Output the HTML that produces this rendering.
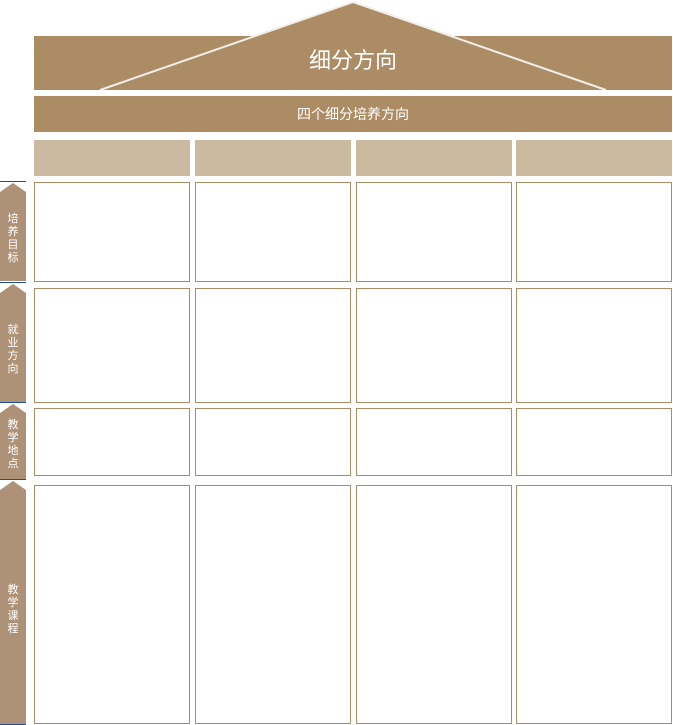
<!DOCTYPE html>
<html><head><meta charset="utf-8"><style>
html,body{margin:0;padding:0;background:#fff;width:673px;height:725px;overflow:hidden}
svg text{font-family:"Liberation Sans","Noto Sans CJK SC",sans-serif}
</style></head><body>
<svg width="673" height="725" viewBox="0 0 673 725" xmlns="http://www.w3.org/2000/svg">
<rect x="34" y="36" width="638" height="54" fill="#ac8c65"/>
<polygon points="100,90 353,2 606,90" fill="#ac8c65"/>
<polyline points="100,90 353,2 606,90" fill="none" stroke="#f2eee8" stroke-width="2"/>
<text x="353" y="68" font-size="22" fill="#fff" text-anchor="middle">细分方向</text>
<rect x="34" y="96" width="638" height="36" fill="#ac8c65"/>
<text x="353" y="119" font-size="14" fill="#fff" text-anchor="middle">四个细分培养方向</text>
<g fill="#cbb9a0">
<rect x="34" y="140" width="156" height="36"/><rect x="195" y="140" width="156" height="36"/>
<rect x="356" y="140" width="156" height="36"/><rect x="516" y="140" width="156" height="36"/>
</g>
<g fill="#fff" stroke="#ac8c65" stroke-width="1">
<rect x="34.5" y="182.5" width="155" height="99"/><rect x="195.5" y="182.5" width="155" height="99"/><rect x="356.5" y="182.5" width="155" height="99"/><rect x="516.5" y="182.5" width="155" height="99"/>
<rect x="34.5" y="288.5" width="155" height="114"/><rect x="195.5" y="288.5" width="155" height="114"/><rect x="356.5" y="288.5" width="155" height="114"/><rect x="516.5" y="288.5" width="155" height="114"/>
<rect x="34.5" y="408.5" width="155" height="67"/><rect x="195.5" y="408.5" width="155" height="67"/><rect x="356.5" y="408.5" width="155" height="67"/><rect x="516.5" y="408.5" width="155" height="67"/>
<rect x="34.5" y="485.5" width="155" height="238"/><rect x="195.5" y="485.5" width="155" height="238"/><rect x="356.5" y="485.5" width="155" height="238"/><rect x="516.5" y="485.5" width="155" height="238"/>
</g>
<g fill="#ae9277">
<polygon points="0,192 13,183 26,192 26,281 0,281"/>
<polygon points="0,293 13,284 26,293 26,402 0,402"/>
<polygon points="0,413 13,404 26,413 26,479 0,479"/>
<polygon points="0,490 13,481 26,490 26,724 0,724"/>
</g>
<g stroke="#1f4e9a" stroke-width="1">
<line x1="0" y1="181.5" x2="26" y2="181.5"/><line x1="0" y1="282.5" x2="26" y2="282.5"/>
<line x1="0" y1="402.5" x2="26" y2="402.5"/><line x1="0" y1="479.5" x2="26" y2="479.5"/>
<line x1="0" y1="724.5" x2="26" y2="724.5"/>
</g>
<g fill="#fff" font-size="11" text-anchor="middle">
<text x="13" y="222">培</text><text x="13" y="235">养</text><text x="13" y="248">目</text><text x="13" y="261">标</text>
<text x="13" y="333">就</text><text x="13" y="346">业</text><text x="13" y="359">方</text><text x="13" y="372">向</text>
<text x="13" y="428">教</text><text x="13" y="441">学</text><text x="13" y="454">地</text><text x="13" y="467">点</text>
<text x="13" y="593">教</text><text x="13" y="606">学</text><text x="13" y="619">课</text><text x="13" y="632">程</text>
</g>
</svg>
</body></html>
